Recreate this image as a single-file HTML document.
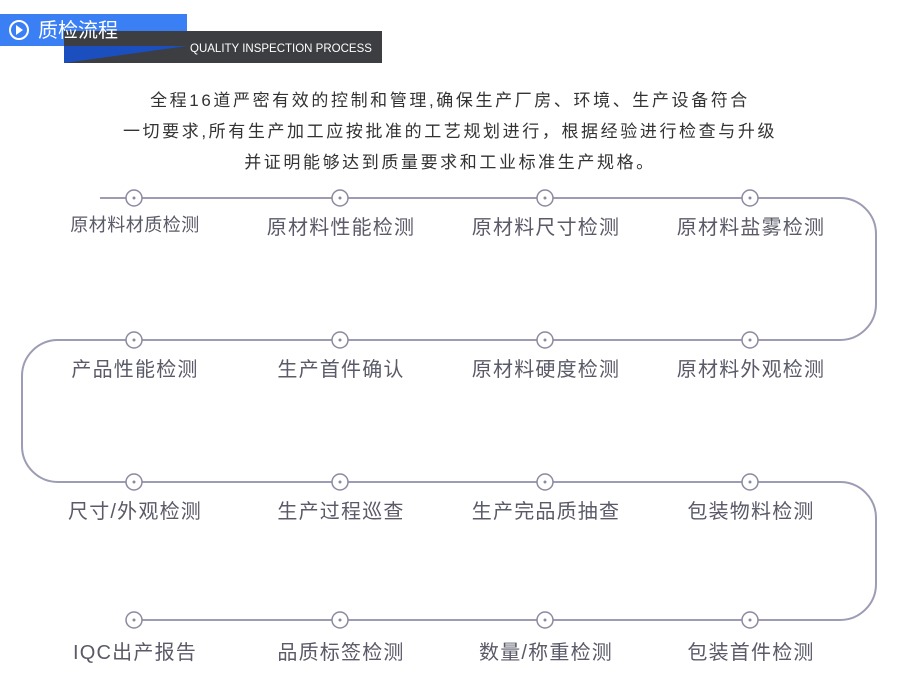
<!DOCTYPE html>
<html><head><meta charset="utf-8"><style>
body{margin:0;width:900px;height:675px;background:#fff;position:relative;overflow:hidden;font-family:"Liberation Sans","Noto Sans CJK SC",sans-serif}
.p{position:absolute;left:0;width:900px;text-align:center;font-size:17px;color:#333;letter-spacing:2.6px}
.l{position:absolute;width:200px;text-align:center;font-size:20px;color:#5a5a68;letter-spacing:1.2px}
</style></head><body>
<svg width="900" height="675" style="position:absolute;left:0;top:0">
<rect x="0" y="14" width="187" height="32" fill="#3b7ff5"/>
<polygon points="64,31 382,31 382,63 64,63" fill="#3d3e42"/>
<polygon points="64,46 187,46 64,63" fill="#1b4fc0"/>
<circle cx="19" cy="30" r="9" fill="none" stroke="#fff" stroke-width="2"/>
<path d="M16,25 L23,30 L16,35 Z" fill="#fff"/>
<text x="38" y="37" fill="#fff" font-size="20" font-family="Liberation Sans,Noto Sans CJK SC,sans-serif">质检流程</text>
<text x="190" y="52" fill="#fff" font-size="11.5" font-family="Liberation Sans,sans-serif">QUALITY INSPECTION PROCESS</text>
<path d="M100,198 H840 A36,36 0 0 1 876,234 V304 A36,36 0 0 1 840,340 H58 A36,36 0 0 0 22,376 V446 A36,36 0 0 0 58,482 H840 A36,36 0 0 1 876,518 V584 A36,36 0 0 1 840,620 H130" fill="none" stroke="#9c9cb4" stroke-width="2"/>
<g fill="#fff" stroke="#8a8aa0" stroke-width="1.5">
<circle cx="134" cy="198" r="8"/><circle cx="340" cy="198" r="8"/><circle cx="545" cy="198" r="8"/><circle cx="750" cy="198" r="8"/>
<circle cx="134" cy="340" r="8"/><circle cx="340" cy="340" r="8"/><circle cx="545" cy="340" r="8"/><circle cx="750" cy="340" r="8"/>
<circle cx="134" cy="482" r="8"/><circle cx="340" cy="482" r="8"/><circle cx="545" cy="482" r="8"/><circle cx="750" cy="482" r="8"/>
<circle cx="134" cy="620" r="8"/><circle cx="340" cy="620" r="8"/><circle cx="545" cy="620" r="8"/><circle cx="750" cy="620" r="8"/>
</g>
<g fill="#8a8aa0">
<circle cx="134" cy="198" r="1.5"/><circle cx="340" cy="198" r="1.5"/><circle cx="545" cy="198" r="1.5"/><circle cx="750" cy="198" r="1.5"/>
<circle cx="134" cy="340" r="1.5"/><circle cx="340" cy="340" r="1.5"/><circle cx="545" cy="340" r="1.5"/><circle cx="750" cy="340" r="1.5"/>
<circle cx="134" cy="482" r="1.5"/><circle cx="340" cy="482" r="1.5"/><circle cx="545" cy="482" r="1.5"/><circle cx="750" cy="482" r="1.5"/>
<circle cx="134" cy="620" r="1.5"/><circle cx="340" cy="620" r="1.5"/><circle cx="545" cy="620" r="1.5"/><circle cx="750" cy="620" r="1.5"/>
</g>
</svg>
<div class="p" style="top:86px">全程16道严密有效的控制和管理,确保生产厂房、环境、生产设备符合</div>
<div class="p" style="top:117px">一切要求,所有生产加工应按批准的工艺规划进行，根据经验进行检查与升级</div>
<div class="p" style="top:148px">并证明能够达到质量要求和工业标准生产规格。</div>
<div class="l" style="left:35px;top:211px;font-size:18px;letter-spacing:0.5px">原材料材质检测</div>
<div class="l" style="left:241px;top:211px">原材料性能检测</div>
<div class="l" style="left:446px;top:211px">原材料尺寸检测</div>
<div class="l" style="left:651px;top:211px">原材料盐雾检测</div>
<div class="l" style="left:35px;top:353px">产品性能检测</div>
<div class="l" style="left:241px;top:353px">生产首件确认</div>
<div class="l" style="left:446px;top:353px">原材料硬度检测</div>
<div class="l" style="left:651px;top:353px">原材料外观检测</div>
<div class="l" style="left:35px;top:495px">尺寸/外观检测</div>
<div class="l" style="left:241px;top:495px">生产过程巡查</div>
<div class="l" style="left:446px;top:495px">生产完品质抽查</div>
<div class="l" style="left:651px;top:495px">包装物料检测</div>
<div class="l" style="left:35px;top:636px">IQC出产报告</div>
<div class="l" style="left:241px;top:636px">品质标签检测</div>
<div class="l" style="left:446px;top:636px">数量/称重检测</div>
<div class="l" style="left:651px;top:636px">包装首件检测</div>
</body></html>
